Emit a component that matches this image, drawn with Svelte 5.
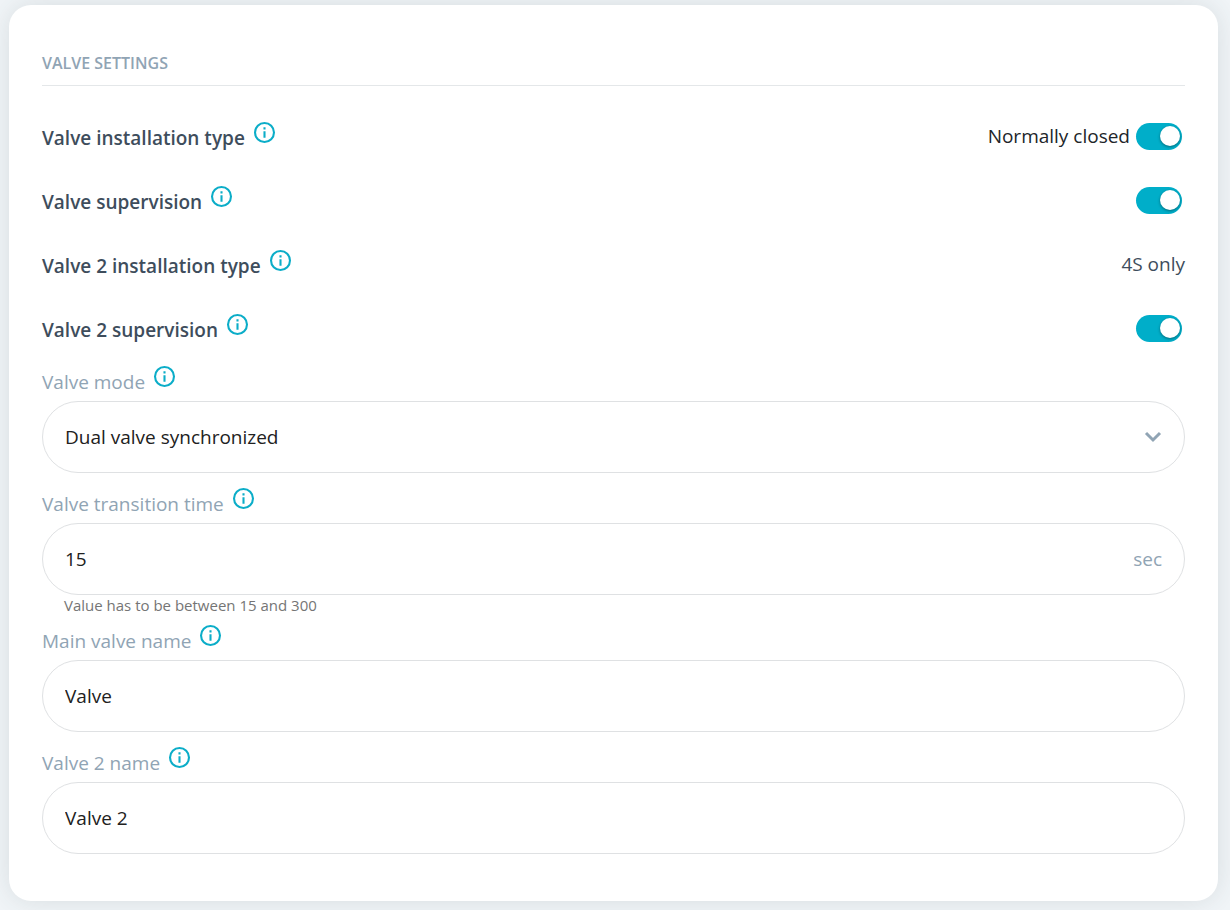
<script lang="ts">
  let normallyClosed = $state(true);
  let supervision = $state(true);
  let supervision2 = $state(true);
  let mode = $state('sync');
  let transitionTime = $state('15');
  let mainName = $state('Valve');
  let secondName = $state('Valve 2');
</script>

{#snippet info()}
  <button type="button" class="info" aria-label="More information">
    <svg viewBox="0 0 24 24" width="25" height="25" aria-hidden="true">
      <circle cx="12" cy="12" r="9.1" fill="none" stroke="currentColor" stroke-width="2" />
      <path d="M11 7h2v2h-2zM11 10.8h2V17h-2z" fill="currentColor" />
    </svg>
  </button>
{/snippet}

<main class="page">
  <form class="card">
    <h2>Valve settings</h2>

    <div class="rows">
      <div class="row">
        <div class="caption">
          <label for="install-type">Valve installation type</label>
          {@render info()}
        </div>
        <div class="value">
          <span class="state">{normallyClosed ? 'Normally closed' : 'Normally open'}</span>
          <input id="install-type" class="toggle" type="checkbox" role="switch" bind:checked={normallyClosed} />
        </div>
      </div>
      <div class="row">
        <div class="caption">
          <label for="supervision">Valve supervision</label>
          {@render info()}
        </div>
        <input id="supervision" class="toggle" type="checkbox" role="switch" bind:checked={supervision} />
      </div>
      <div class="row">
        <div class="caption">
          <span>Valve 2 installation type</span>
          {@render info()}
        </div>
        <span class="fixed">4S only</span>
      </div>
      <div class="row">
        <div class="caption">
          <label for="supervision-2">Valve 2 supervision</label>
          {@render info()}
        </div>
        <input id="supervision-2" class="toggle" type="checkbox" role="switch" bind:checked={supervision2} />
      </div>
    </div>

    <div class="fields">
      <div class="field">
        <div class="caption">
          <label for="mode">Valve mode</label>
          {@render info()}
        </div>
        <div class="control">
          <select id="mode" bind:value={mode}>
            <option value="single">Single valve</option>
            <option value="sync">Dual valve synchronized</option>
          </select>
          <svg class="chevron" viewBox="0 0 18 12" width="18" height="12" aria-hidden="true">
            <path d="M2 2l7 7 7-7" fill="none" stroke="currentColor" stroke-width="3" />
          </svg>
        </div>
      </div>
      <div class="field">
        <div class="caption">
          <label for="time">Valve transition time</label>
          {@render info()}
        </div>
        <div class="control">
          <input id="time" type="text" inputmode="numeric" aria-describedby="time-hint" bind:value={transitionTime} />
          <span class="unit">sec</span>
        </div>
        <p id="time-hint" class="hint">Value has to be between 15 and 300</p>
      </div>
      <div class="field">
        <div class="caption">
          <label for="main-name">Main valve name</label>
          {@render info()}
        </div>
        <div class="control">
          <input id="main-name" type="text" bind:value={mainName} />
        </div>
      </div>
      <div class="field">
        <div class="caption">
          <label for="second-name">Valve 2 name</label>
          {@render info()}
        </div>
        <div class="control">
          <input id="second-name" type="text" bind:value={secondName} />
        </div>
      </div>
    </div>
  </form>
</main>

<style>
  :global(body) {
    background: #f1f5f8;
    font-family: 'Open Sans', 'Noto Sans', sans-serif;
    font-size: 19px;
    color: #212529;
  }

  .page {
    padding: 5px 12px 9px 9px;
  }

  .card {
    background: #fff;
    border-radius: 22px;
    padding: 45px 33px 47px;
    box-shadow: 0 0 28px rgba(50, 60, 65, 0.13);
  }

  h2 {
    margin: 0 0 18px;
    padding-bottom: 8px;
    border-bottom: 1px solid #e4e7e9;
    font-size: 16px;
    line-height: 27px;
    font-weight: 600;
    text-transform: uppercase;
    color: #90a4b4;
  }

  .row {
    display: flex;
    align-items: center;
    justify-content: space-between;
    height: 64px;
  }

  .caption {
    display: flex;
    align-items: center;
    gap: 7px;
  }

  .row .caption {
    padding-top: 4px;
    font-weight: 600;
    color: #3e4d5c;
  }

  .value {
    display: flex;
    align-items: center;
    gap: 6px;
  }

  .fixed {
    color: #3e4d5c;
  }

  .info {
    display: flex;
    margin: 0 0 12px;
    padding: 0;
    border: 0;
    background: none;
    color: #0badc8;
    cursor: pointer;
  }

  .toggle {
    appearance: none;
    position: relative;
    width: 46px;
    height: 27px;
    margin: 0 3px 0 0;
    border-radius: 14px;
    background: #b8c4cd;
    cursor: pointer;
  }

  .toggle::before {
    content: '';
    position: absolute;
    top: 3px;
    left: 3px;
    width: 20px;
    height: 20px;
    border-radius: 50%;
    background: #fff;
    box-shadow: 0 1px 3px rgba(0, 0, 0, 0.4);
    transition: left 0.2s;
  }

  .toggle:checked {
    background: #00aec9;
  }

  .toggle:checked::before {
    left: 24px;
  }

  .fields {
    display: flex;
    flex-direction: column;
    gap: 10px;
    margin-top: 1px;
  }

  .field .caption {
    height: 40px;
    padding-top: 2px;
    box-sizing: border-box;
    color: #90a4b4;
  }

  .control {
    display: flex;
    align-items: center;
    height: 72px;
    box-sizing: border-box;
    padding-right: 22px;
    border: 1px solid #dfe1e3;
    border-radius: 36px;
  }

  .control:focus-within {
    border-color: #00aec9;
  }

  .control input,
  .control select {
    appearance: none;
    flex: 1;
    min-width: 0;
    height: 100%;
    padding: 0 0 0 22px;
    border: 0;
    outline: 0;
    background: none;
    font: inherit;
    color: #212121;
  }

  .chevron {
    color: #90a4b4;
    pointer-events: none;
  }

  .unit {
    color: #90a4b4;
  }

  .hint {
    margin: 0 22px -5px;
    font-size: 15px;
    line-height: 20px;
    color: #757575;
  }
</style>
